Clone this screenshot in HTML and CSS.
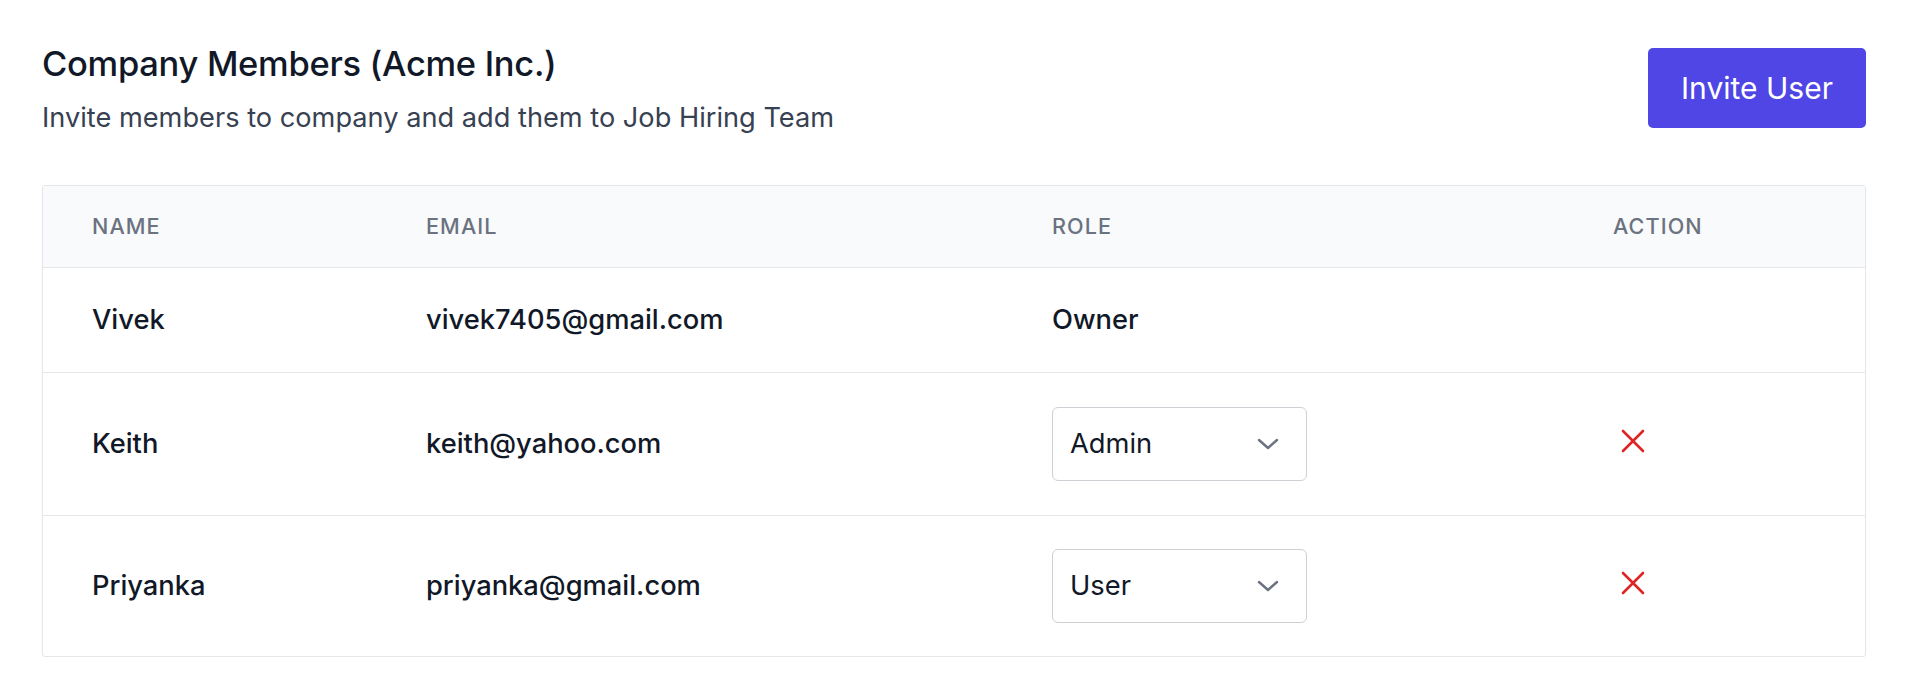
FILE: index.html
```html
<!DOCTYPE html>
<html lang="en">
<head>
<meta charset="utf-8">
<title>Company Members</title>
<link rel="stylesheet" href="styles.css">
</head>
<body>
<div class="page">
  <div class="head">
    <div class="head-text">
      <h1 class="title">Company Members (Acme Inc.)</h1>
      <p class="subtitle">Invite members to company and add them to Job Hiring Team</p>
    </div>
    <button class="invite-btn">Invite User</button>
  </div>

  <div class="card">
    <table class="members">
      <colgroup>
        <col class="c-name">
        <col class="c-email">
        <col class="c-role">
        <col class="c-action">
      </colgroup>
      <thead>
        <tr>
          <th>Name</th>
          <th>Email</th>
          <th>Role</th>
          <th>Action</th>
        </tr>
      </thead>
      <tbody>
        <tr class="row-owner">
          <td>Vivek</td>
          <td>vivek7405@gmail.com</td>
          <td>Owner</td>
          <td></td>
        </tr>
        <tr>
          <td>Keith</td>
          <td>keith@yahoo.com</td>
          <td>
            <div class="select">
              <span>Admin</span>
              <svg class="chev" viewBox="0 0 22 12" width="22" height="12"><path d="M2 2 L11 10 L20 2" fill="none" stroke="currentColor" stroke-width="2.4" stroke-linecap="round" stroke-linejoin="round"/></svg>
            </div>
          </td>
          <td>
            <button class="remove" aria-label="Remove">
              <svg viewBox="0 0 24 24" width="24" height="24"><path d="M2 2 L22 22 M22 2 L2 22" fill="none" stroke="currentColor" stroke-width="2.6" stroke-linecap="round"/></svg>
            </button>
          </td>
        </tr>
        <tr>
          <td>Priyanka</td>
          <td>priyanka@gmail.com</td>
          <td>
            <div class="select">
              <span>User</span>
              <svg class="chev" viewBox="0 0 22 12" width="22" height="12"><path d="M2 2 L11 10 L20 2" fill="none" stroke="currentColor" stroke-width="2.4" stroke-linecap="round" stroke-linejoin="round"/></svg>
            </div>
          </td>
          <td>
            <button class="remove" aria-label="Remove">
              <svg viewBox="0 0 24 24" width="24" height="24"><path d="M2 2 L22 22 M22 2 L2 22" fill="none" stroke="currentColor" stroke-width="2.6" stroke-linecap="round"/></svg>
            </button>
          </td>
        </tr>
      </tbody>
    </table>
  </div>
</div>
</body>
</html>
```

FILE: styles.css
```css
* { box-sizing: border-box; }
html, body { margin: 0; padding: 0; background: #ffffff; }
body {
  font-family: Inter, "Noto Sans", "Liberation Sans", sans-serif;
  color: #111827;
}
.page {
  padding: 42px 42px 0 42px;
}
.head {
  display: flex;
  justify-content: space-between;
  align-items: flex-start;
}
.title {
  margin: 0;
  font-size: 34.5px;
  line-height: 44px;
  font-weight: 500;
  color: #111827;
  letter-spacing: -0.3px;
}
.subtitle {
  margin: 14px 0 0 0;
  font-size: 27.2px;
  line-height: 36px;
  font-weight: 400;
  color: #374151;
}
.invite-btn {
  margin-top: 6px;
  width: 218px;
  height: 80px;
  border: none;
  border-radius: 5px;
  background: #4f46e5;
  color: #ffffff;
  font-family: inherit;
  font-size: 30px;
  font-weight: 400;
  padding: 0;
}
.card {
  margin-top: 49px;
  border: 1px solid #e5e7eb;
  border-radius: 3px;
  overflow: hidden;
  box-shadow: 0 1px 2px rgba(0,0,0,0.04);
}
.members {
  width: 100%;
  border-collapse: collapse;
  table-layout: fixed;
}
.c-name { width: 334px; }
.c-email { width: 626px; }
.c-role { width: 561px; }
.members th {
  background: #f9fafb;
  height: 81px;
  padding: 0 0 0 49px;
  text-align: left;
  font-size: 21.6px;
  font-weight: 500;
  letter-spacing: 0.05em;
  text-transform: uppercase;
  color: #6b7280;
  border-bottom: 1px solid #e5e7eb;
}
.members td {
  padding: 0 0 0 49px;
  font-size: 27.3px;
  font-weight: 500;
  color: #111827;
  border-bottom: 1px solid #e5e7eb;
  height: 143px;
  vertical-align: middle;
}
.members tbody tr:last-child td { border-bottom: none; height: 141px; }
.members tr.row-owner td { height: 105px; }
.select {
  width: 255px;
  height: 74px;
  border: 1.5px solid #cdd1d6;
  border-radius: 6px;
  display: flex;
  align-items: center;
  justify-content: space-between;
  padding: 0 27px 0 17px;
  font-size: 27.3px;
  font-weight: 400;
  color: #111827;
  background: #ffffff;
}
.chev { color: #6b7280; display: block; }
.remove {
  border: none;
  background: none;
  padding: 0;
  margin: -6px 0 0 8px;
  color: #dc2626;
  display: block;
  width: 24px;
  height: 24px;
}
.remove svg { display: block; }
```
